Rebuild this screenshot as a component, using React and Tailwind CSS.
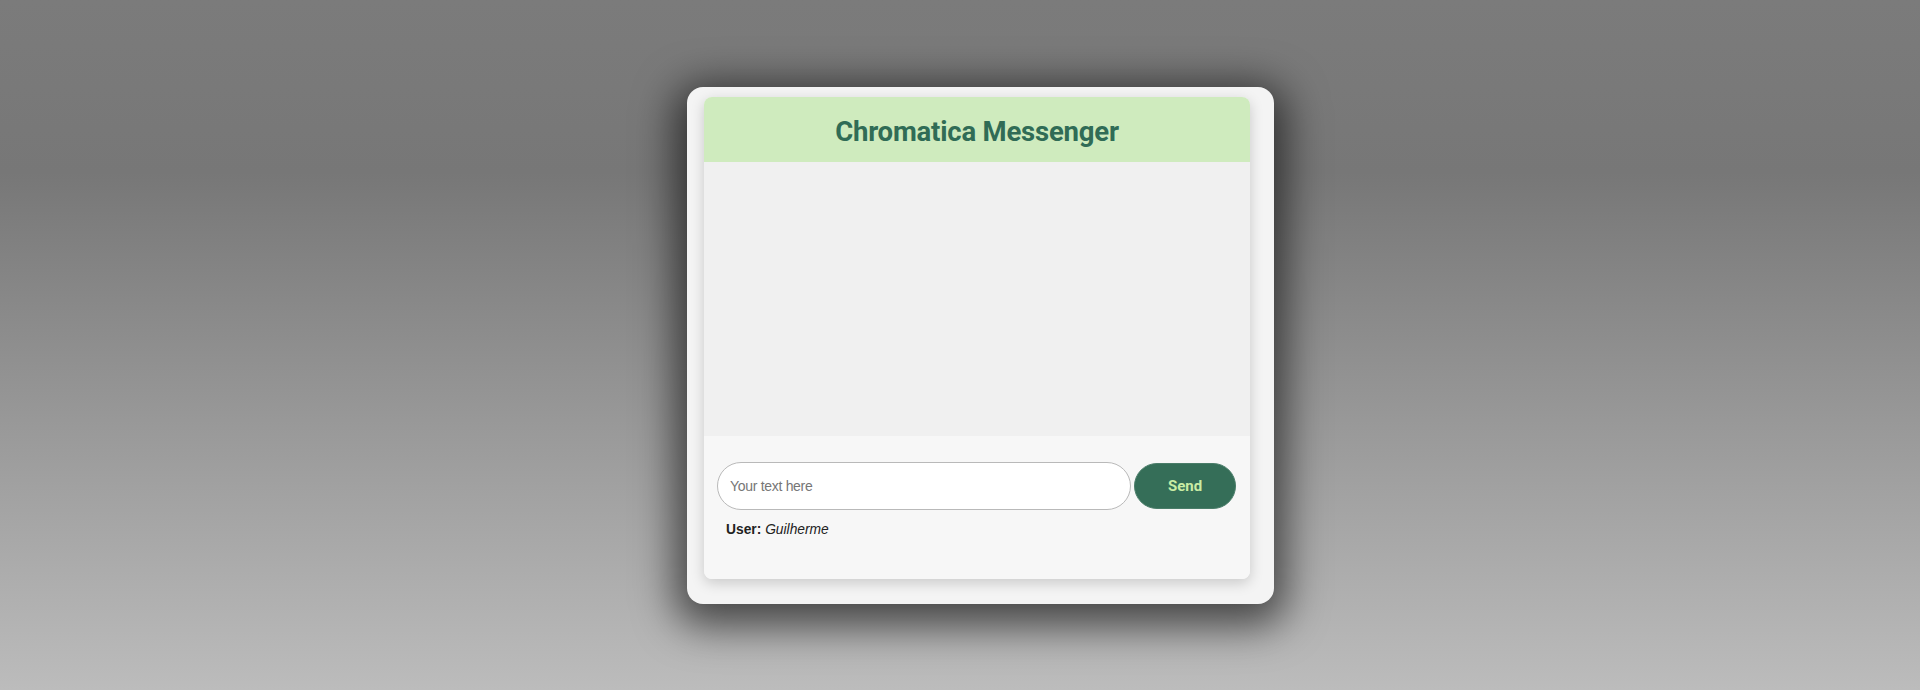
export default function App() {
  return (
    <div className="w-full h-[690px] flex justify-start pl-[687px] bg-[linear-gradient(to_bottom,#7b7b7b_0%,#777777_25%,#bcbcbc_100%)] font-['Liberation_Sans',Arial,sans-serif]">
      {/* Outer frame */}
      <div className="mt-[87px] w-[587px] h-[517px] rounded-[16px] bg-[#f4f4f4] pl-[17px] pr-[24px] pt-[10px] shadow-[0_10px_40px_12px_rgba(0,0,0,0.6)]">
        {/* Chat card */}
        <div className="w-[546px] h-[482px] rounded-[8px] overflow-hidden flex flex-col bg-[#f7f7f7] shadow-[0_4px_14px_rgba(0,0,0,0.18)]">
          <div className="h-[65px] shrink-0 bg-[#cfebbe] flex items-center justify-center pt-[4px]">
            <h1 className="font-['Roboto',sans-serif] font-bold text-[27.5px] text-[#306c56] tracking-[-0.2px]">
              Chromatica Messenger
            </h1>
          </div>

          {/* Messages */}
          <div className="h-[274px] shrink-0 bg-[#f0f0f0]" />

          {/* Composer */}
          <div className="flex-1 bg-[#f7f7f7] pt-[26px] pl-[13px] pr-[14px]">
            <div className="flex items-center gap-[3px]">
              <input
                type="text"
                placeholder="Your text here"
                className="flex-1 h-[48px] rounded-full border border-[#b9b9b9] bg-white px-[12px] text-[14px] tracking-[-0.3px] text-[#333] placeholder:text-[#767676] outline-none"
              />
              <button className="w-[102px] h-[46px] rounded-full bg-[#356e58] border border-[#4a7d69] font-['Roboto',sans-serif] font-bold text-[15px] text-[#caeca4]">
                Send
              </button>
            </div>
            <p className="mt-[10px] pl-[9px] text-[13.8px] text-[#222]">
              <span className="font-bold">User:</span> <em>Guilherme</em>
            </p>
          </div>
        </div>
      </div>
    </div>
  );
}
